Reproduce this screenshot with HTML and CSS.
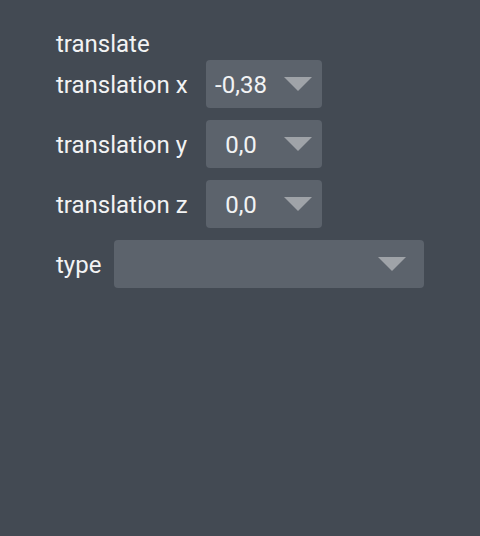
FILE: index.html
```html
<!DOCTYPE html>
<html>
<head>
<meta charset="utf-8">
<link rel="stylesheet" href="styles.css">
</head>
<body>
<div class="panel">
  <div class="title">translate</div>
  <div class="row">
    <span class="label">translation x</span>
    <div class="select small">
      <span class="value">-0,38</span>
      <svg class="arrow" width="28" height="14" viewBox="0 0 28 14"><polygon points="0,0 28,0 14,14" /></svg>
    </div>
  </div>
  <div class="row">
    <span class="label">translation y</span>
    <div class="select small">
      <span class="value">0,0</span>
      <svg class="arrow" width="28" height="14" viewBox="0 0 28 14"><polygon points="0,0 28,0 14,14" /></svg>
    </div>
  </div>
  <div class="row">
    <span class="label">translation z</span>
    <div class="select small">
      <span class="value">0,0</span>
      <svg class="arrow" width="28" height="14" viewBox="0 0 28 14"><polygon points="0,0 28,0 14,14" /></svg>
    </div>
  </div>
  <div class="row row-type">
    <span class="label">type</span>
    <div class="select wide">
      <span class="value"></span>
      <svg class="arrow" width="28" height="14" viewBox="0 0 28 14"><polygon points="0,0 28,0 14,14" /></svg>
    </div>
  </div>
</div>
</body>
</html>
```
FILE: styles.css
```css
html, body {
  margin: 0;
  padding: 0;
  background: #434a53;
  width: 480px;
  height: 536px;
  overflow: hidden;
}
.panel {
  padding: 30px 0 0 56px;
  font-family: Roboto, "Noto Sans", sans-serif;
  font-size: 24px;
  color: #f2f3f4;
  display: flex;
  flex-direction: column;
  gap: 12px;
}
.title {
  line-height: 28px;
  margin-bottom: -10px;
}
.row {
  display: flex;
  align-items: center;
  height: 48px;
}
.label {
  line-height: 28px;
  white-space: nowrap;
  width: 150px;
  flex: none;
  padding-top: 1px;
}
.row-type .label {
  width: 58px;
}
.select {
  box-sizing: border-box;
  flex: none;
  height: 48px;
  background: #5c636c;
  border-radius: 4px;
  display: flex;
  align-items: center;
  justify-content: space-between;
}
.select.small {
  width: 116px;
  padding: 0 10px;
}
.select.wide {
  width: 310px;
  padding: 0 18px 0 10px;
}
.value {
  width: 50px;
  white-space: nowrap;
  display: flex;
  justify-content: center;
  line-height: 28px;
  padding-top: 1px;
}
.arrow {
  fill: #9fa3a8;
  display: block;
}
```
